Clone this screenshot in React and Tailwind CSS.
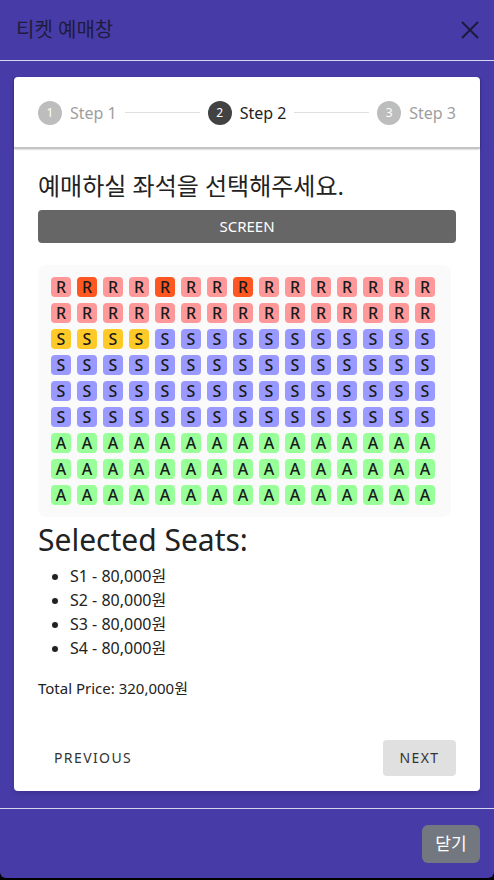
import { useState } from 'react';

const ROWS = [
  { type: 'R', count: 2 },
  { type: 'S', count: 4 },
  { type: 'A', count: 3 },
];

const seatColor = {
  R: 'bg-[#ff9999]',
  S: 'bg-[#9999ff]',
  A: 'bg-[#99ff99]',
};

const reserved = ['R-0-1', 'R-0-4', 'R-0-7'];
const picked = ['S-0-0', 'S-0-1', 'S-0-2', 'S-0-3'];

const Step = ({ num, label, active }) => (
  <div className="flex items-center gap-2">
    <span
      className={`w-6 h-6 rounded-full flex items-center justify-center text-xs text-white ${active ? 'bg-[#424242]' : 'bg-[#bdbdbd]'}`}
    >
      {num}
    </span>
    <span className={`text-base ${active ? 'text-[#222]' : 'text-[#9e9e9e]'}`}>{label}</span>
  </div>
);

const App = () => {
  const [selected] = useState(['S1', 'S2', 'S3', 'S4']);

  const seatRows = [];
  ROWS.forEach(({ type, count }) => {
    for (let r = 0; r < count; r++) seatRows.push({ type, r });
  });

  return (
    <div className="min-h-screen bg-black" style={{ fontFamily: '"Noto Sans", "Noto Sans CJK KR", sans-serif' }}>
      <div className="h-[878px] bg-[#473ba7] rounded-b-md flex flex-col">
        <div className="h-[61px] flex items-center justify-between pl-4 pr-[14px] border-b border-[#d8d5ee]">
          <h1 className="text-xl text-[#1e1b3d]">티켓 예매창</h1>
          <svg width="20" height="20" viewBox="0 0 20 20" className="text-[#1e1b3d]">
            <path d="M2 2 L18 18 M18 2 L2 18" stroke="currentColor" strokeWidth="2" />
          </svg>
        </div>

        <div className="flex-1 px-[14px] pt-4">
          <div className="bg-white rounded h-[714px] flex flex-col shadow-md">
            <div className="h-[71px] flex items-center px-6 pt-px shadow-[0_1px_2px_rgba(0,0,0,0.35)] border-b border-[#c4c4c4]">
              <Step num={1} label="Step 1" />
              <div className="flex-1 mx-2 h-px bg-[#e0e0e0]" />
              <Step num={2} label="Step 2" active />
              <div className="flex-1 mx-2 h-px bg-[#e0e0e0]" />
              <Step num={3} label="Step 3" />
            </div>

            <div className="px-6 flex flex-col">
              <h2 className="text-2xl leading-8 mt-[22px] text-[#222]">예매하실 좌석을 선택해주세요.</h2>
              <div className="mt-2 h-[33px] rounded bg-[#666] text-white text-[15px] flex items-center justify-center">
                SCREEN
              </div>

              <div className="mt-[22px] w-[413px] bg-[#fafafa] rounded-lg pl-[13px] py-3 flex flex-col gap-[6px]">
                {seatRows.map(({ type, r }) => (
                  <div key={`${type}-${r}`} className="flex gap-[6px]">
                    {Array.from({ length: 15 }).map((_, c) => {
                      const id = `${type}-${r}-${c}`;
                      let color = seatColor[type];
                      if (reserved.includes(id)) color = 'bg-[#ff5722]';
                      if (picked.includes(id)) color = 'bg-[#ffca28]';
                      return (
                        <div
                          key={c}
                          className={`w-5 h-5 rounded text-base leading-5 font-medium text-[#1a1a1a] flex items-center justify-center ${color}`}
                        >
                          {type}
                        </div>
                      );
                    })}
                  </div>
                ))}
              </div>

              <h3 className="text-[30px] leading-9 mt-[5px] text-[#222]">Selected Seats:</h3>
              <ul className="list-disc pl-8 mt-[6px] text-base leading-6 text-[#222]">
                {selected.map(s => (
                  <li key={s}>{s} - 80,000원</li>
                ))}
              </ul>
              <p className="mt-4 text-[15px] leading-6 text-[#222]">Total Price: 320,000원</p>

              <div className="mt-10 flex items-center justify-between">
                <button className="h-9 px-4 text-sm tracking-widest text-[#333]">PREVIOUS</button>
                <button className="h-9 w-[73px] rounded bg-[#e0e0e0] text-sm tracking-widest text-[#333]">NEXT</button>
              </div>
            </div>
          </div>
        </div>

        <div className="h-[70px] border-t border-[#d8d5ee] flex items-start justify-end pt-4 pr-[14px]">
          <button className="w-[58px] h-[38px] rounded-md bg-[#737880] text-white text-[17px]">닫기</button>
        </div>
      </div>
    </div>
  );
};

export default App;
